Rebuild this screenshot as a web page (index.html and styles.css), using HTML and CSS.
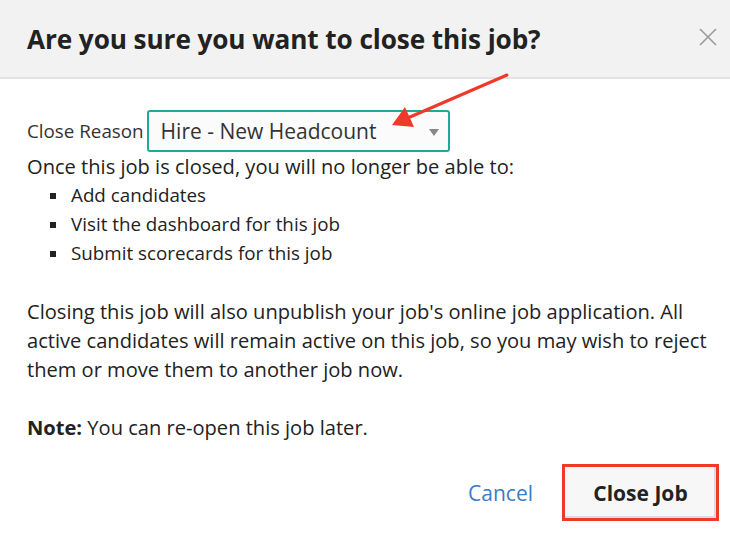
FILE: index.html
```html
<!DOCTYPE html>
<html>
<head>
<meta charset="utf-8">
<link rel="stylesheet" href="styles.css">
</head>
<body>
<div class="modal">
  <div class="modal-header">
    <h1 class="modal-title">Are you sure you want to close this job?</h1>
    <svg class="close-x" width="18" height="18" viewBox="0 0 18 18"><path d="M1 1 L17 17 M17 1 L1 17" stroke="#9a9a9a" stroke-width="1.6" fill="none"/></svg>
  </div>
  <div class="modal-body">
    <div class="reason-row">
      <span class="reason-label">Close Reason</span>
      <div class="select">
        <span class="select-value">Hire - New Headcount</span>
        <span class="select-caret"></span>
      </div>
    </div>
    <p class="text">Once this job is closed, you will no longer be able to:</p>
    <ul class="bullets">
      <li>Add candidates</li>
      <li>Visit the dashboard for this job</li>
      <li>Submit scorecards for this job</li>
    </ul>
    <p class="text para">Closing this job will also unpublish your job's online job application. All active candidates will remain active on this job, so you may wish to reject them or move them to another job now.</p>
    <p class="text para"><strong>Note:</strong> You can re-open this job later.</p>
    <div class="modal-footer">
      <a class="cancel">Cancel</a>
      <button class="primary">Close Job</button>
    </div>
  </div>
  <svg class="arrow" width="730" height="533" viewBox="0 0 730 533">
    <line x1="507" y1="75" x2="410" y2="117" stroke="#ee3a2a" stroke-width="3" stroke-linecap="round"/>
    <polygon points="392,125 405,107 414,127" fill="#ee3a2a"/>
  </svg>
</div>
</body>
</html>
```
FILE: styles.css
```css
html, body {
  margin: 0;
  padding: 0;
  background: #fff;
}
body {
  font-family: "Open Sans", "Liberation Sans", sans-serif;
  color: #222;
}
.modal {
  position: relative;
  width: 730px;
  height: 533px;
  overflow: hidden;
}
.modal-header {
  height: 77px;
  background: #f2f2f2;
  border-bottom: 2px solid #e2e2e2;
  display: flex;
  align-items: center;
  justify-content: space-between;
  padding: 0 13px 0 27px;
}
.modal-title {
  margin: 0;
  font-size: 26.2px;
  font-weight: 700;
  color: #222;
  letter-spacing: -0.1px;
}
.close-x {
  display: block;
  margin-top: -4px;
}
.modal-body {
  padding: 31px 8px 0 27px;
}
.reason-row {
  display: flex;
  align-items: center;
  height: 42px;
}
.reason-label {
  font-size: 18.8px;
  color: #333;
  margin-right: 3px;
}
.select {
  box-sizing: border-box;
  width: 303px;
  height: 42px;
  border: 2px solid #1eaa9b;
  border-radius: 3px;
  background: #fbfbfb;
  display: flex;
  align-items: center;
  justify-content: space-between;
  padding: 0 9px 0 12px;
}
.select-value {
  font-size: 21px;
  color: #333;
}
.select-caret {
  width: 0;
  height: 0;
  border-left: 5px solid transparent;
  border-right: 5px solid transparent;
  border-top: 7px solid #888;
  margin-top: 2px;
}
.text {
  margin: 0;
  font-size: 20.1px;
  line-height: 29px;
  color: #222;
}
.para {
  margin-top: 29px;
}
.bullets {
  list-style: none;
  margin: 0;
  padding: 0 0 0 23px;
  font-size: 18.8px;
  line-height: 29px;
  color: #222;
}
.bullets li {
  display: flex;
  align-items: center;
}
.bullets li::before {
  content: "";
  width: 6px;
  height: 6px;
  background: #222;
  margin-right: 15px;
  flex: none;
}
.modal-footer {
  display: flex;
  justify-content: flex-end;
  align-items: center;
  margin-top: 22px;
  margin-right: 3px;
}
.cancel {
  font-size: 21px;
  color: #3a7bc6;
  margin-right: 29px;
}
.primary {
  box-sizing: border-box;
  width: 157px;
  height: 57px;
  border: 3px solid #ee3a2a;
  background: #f7f7f7;
  box-shadow: inset -2px -2px 0 #dcdcdc;
  font-family: "Open Sans", "Liberation Sans", sans-serif;
  font-size: 21px;
  font-weight: 700;
  color: #222;
  padding: 0;
}
.arrow {
  position: absolute;
  left: 0;
  top: 0;
  pointer-events: none;
}
```
